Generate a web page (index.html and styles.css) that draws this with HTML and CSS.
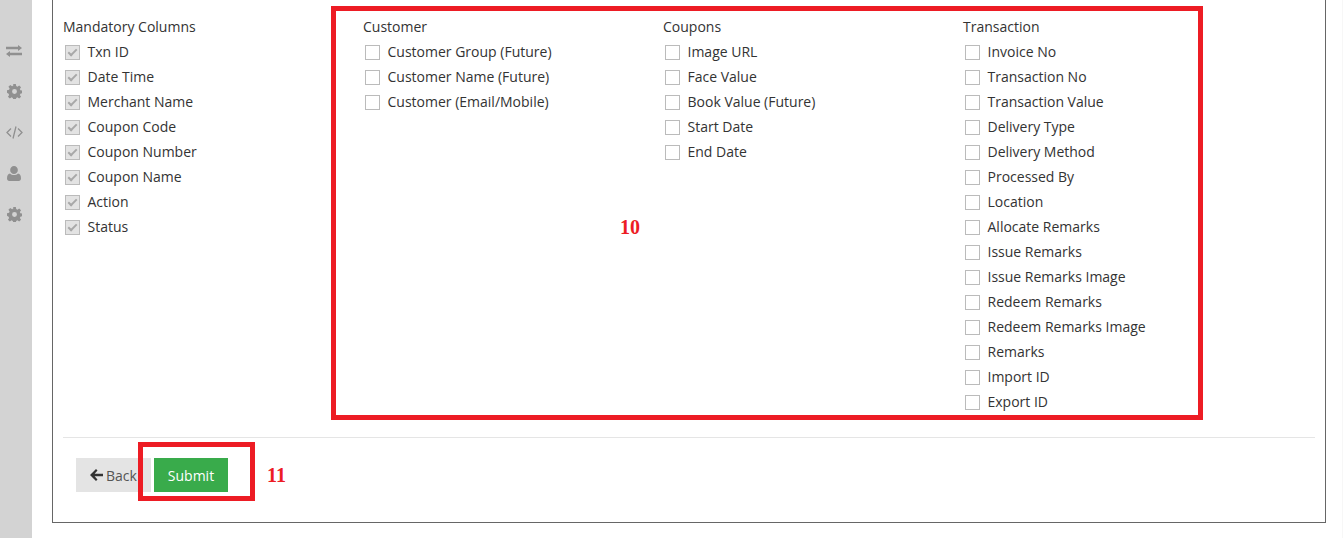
FILE: index.html
```html
<!DOCTYPE html>
<html lang="en">
<head>
    <meta charset="UTF-8">
    <meta name="viewport" content="width=device-width, initial-scale=1.0">
    <title>Export Columns</title>
    <link rel="stylesheet" href="styles.css">
</head>
<body>

<div class="layout">
    <nav class="sidebar">
        <span class="nav-item"><svg class="icon-swap" viewBox="0 0 16 12"><path d="M0 1.800h12V0l4 3-4 3V4.200H0zM16 7.800H4V6l-4 3 4 3v-1.800h12z" fill="#909090"/></svg></span>
        <span class="nav-item"><svg class="icon-gear" viewBox="0 0 16 16"><path fill="#909090" fill-rule="evenodd" d="M6.600 0h2.800l.4 2.200 1.300.6 1.900-1.300 2 2-1.300 1.900.6 1.300 2.200.4v2.800l-2.200.4-.6 1.300 1.300 1.900-2 2-1.900-1.300-1.300.6-.4 2.200H6.600l-.4-2.200-1.300-.6-1.900 1.300-2-2 1.300-1.900-.6-1.300L0 9.400V6.600l2.200-.4.6-1.300-1.300-1.900 2-2 1.900 1.300 1.300-.6zM8 5.400a2.600 2.600 0 1 0 0 5.200 2.600 2.600 0 0 0 0-5.200z"/></svg></span>
        <span class="nav-item"><svg class="icon-code" viewBox="0 0 17 13"><path d="M5 2.500L1 6.500l4 4M12 2.500l4 4-4 4M10 .5l-3 12" fill="none" stroke="#909090" stroke-width="1.300"/></svg></span>
        <span class="nav-item"><svg class="icon-user" viewBox="0 0 14 15"><path fill="#909090" d="M7 0a3.800 3.800 0 0 1 3.800 4A3.800 3.800 0 0 1 7 8 3.800 3.800 0 0 1 3.200 4 3.800 3.800 0 0 1 7 0zM3 7.500C4 8.500 5.500 9 7 9s3-.5 4-1.500c2 .2 3 2 3 5 0 1.600-1 2.500-2.200 2.500H2.200C1 15 0 14.100 0 12.500c0-3 1-4.800 3-5z"/></svg></span>
        <span class="nav-item"><svg class="icon-gear" viewBox="0 0 16 16"><path fill="#909090" fill-rule="evenodd" d="M6.600 0h2.800l.4 2.200 1.300.6 1.900-1.300 2 2-1.300 1.900.6 1.300 2.200.4v2.800l-2.200.4-.6 1.300 1.300 1.900-2 2-1.900-1.300-1.300.6-.4 2.200H6.600l-.4-2.200-1.300-.6-1.900 1.300-2-2 1.300-1.900-.6-1.300L0 9.400V6.600l2.200-.4.6-1.300-1.300-1.900 2-2 1.900 1.300 1.300-.6zM8 5.400a2.600 2.600 0 1 0 0 5.200 2.600 2.600 0 0 0 0-5.200z"/></svg></span>
    </nav>

    <main class="panel">
        <form class="columns-form">
            <div class="columns">
                <div class="column">
                    <div class="column-title">Mandatory Columns</div>
                    <label class="check"><input type="checkbox" checked disabled>Txn ID</label>
                    <label class="check"><input type="checkbox" checked disabled>Date Time</label>
                    <label class="check"><input type="checkbox" checked disabled>Merchant Name</label>
                    <label class="check"><input type="checkbox" checked disabled>Coupon Code</label>
                    <label class="check"><input type="checkbox" checked disabled>Coupon Number</label>
                    <label class="check"><input type="checkbox" checked disabled>Coupon Name</label>
                    <label class="check"><input type="checkbox" checked disabled>Action</label>
                    <label class="check"><input type="checkbox" checked disabled>Status</label>
                </div>
                <div class="column">
                    <div class="column-title">Customer</div>
                    <label class="check"><input type="checkbox">Customer Group (Future)</label>
                    <label class="check"><input type="checkbox">Customer Name (Future)</label>
                    <label class="check"><input type="checkbox">Customer (Email/Mobile)</label>
                </div>
                <div class="column">
                    <div class="column-title">Coupons</div>
                    <label class="check"><input type="checkbox">Image URL</label>
                    <label class="check"><input type="checkbox">Face Value</label>
                    <label class="check"><input type="checkbox">Book Value (Future)</label>
                    <label class="check"><input type="checkbox">Start Date</label>
                    <label class="check"><input type="checkbox">End Date</label>
                </div>
                <div class="column">
                    <div class="column-title">Transaction</div>
                    <label class="check"><input type="checkbox">Invoice No</label>
                    <label class="check"><input type="checkbox">Transaction No</label>
                    <label class="check"><input type="checkbox">Transaction Value</label>
                    <label class="check"><input type="checkbox">Delivery Type</label>
                    <label class="check"><input type="checkbox">Delivery Method</label>
                    <label class="check"><input type="checkbox">Processed By</label>
                    <label class="check"><input type="checkbox">Location</label>
                    <label class="check"><input type="checkbox">Allocate Remarks</label>
                    <label class="check"><input type="checkbox">Issue Remarks</label>
                    <label class="check"><input type="checkbox">Issue Remarks Image</label>
                    <label class="check"><input type="checkbox">Redeem Remarks</label>
                    <label class="check"><input type="checkbox">Redeem Remarks Image</label>
                    <label class="check"><input type="checkbox">Remarks</label>
                    <label class="check"><input type="checkbox">Import ID</label>
                    <label class="check"><input type="checkbox">Export ID</label>
                </div>
            </div>
            <hr class="divider">
            <div class="actions">
                <button type="button" class="btn btn-back"><svg class="back-icon" viewBox="0 0 13 12"><path d="M6 0L0 6l6 6 1.500-1.500L4.600 7.300H13V4.700H4.600l2.900-3.200z" fill="#333"/></svg>Back</button>
                <button type="submit" class="btn btn-submit">Submit</button>
            </div>
        </form>

        <!-- annotations drawn over the screenshot -->
        <div class="mark mark-columns"></div>
        <div class="mark mark-submit"></div>
        <span class="mark-num num-columns">10</span>
        <span class="mark-num num-submit">11</span>
    </main>
</div>

</body>
</html>
```

FILE: styles.css
```css
body {
    margin: 0;
    background-color: white;
    font-family: "Open Sans", Arial, sans-serif;
    font-size: 14px;
    color: #333;
    overflow: hidden;
}
.layout {
    display: flex;
    box-sizing: border-box;
    height: 538px;
    border-right: 1px solid #f7f7f7;
}
.sidebar {
    width: 32px;
    flex: none;
    box-sizing: border-box;
    padding: 30px 4px 0 0;
    background-color: #d3d3d3;
}
.nav-item {
    display: flex;
    align-items: center;
    justify-content: center;
    height: 41px;
}
.icon-swap {
    width: 16px;
    height: 12px;
}
.icon-gear {
    width: 15px;
    height: 15px;
}
.icon-code {
    width: 17px;
    height: 13px;
}
.icon-user {
    width: 14px;
    height: 15px;
}
.panel {
    position: relative;
    box-sizing: border-box;
    width: 1274px;
    height: 524px;
    margin: -1px 0 0 20px;
    border: 1px solid #666;
    border-top: none;
}
.columns-form {
    padding: 16px 10px 0;
}
.columns {
    display: grid;
    grid-template-columns: repeat(4, 300px);
    height: 422px;
}
.column-title {
    height: 25px;
    line-height: 23px;
}
.check {
    display: flex;
    align-items: center;
    box-sizing: border-box;
    height: 25px;
    padding: 0 0 2px 2px;
}
.check input {
    appearance: none;
    flex: none;
    width: 15px;
    height: 15px;
    margin: 2px 7.500px 0 0;
    border: 1px solid #bbb;
    background-color: white;
}
.check input:checked {
    background-color: #e3e3e3;
}
.check input:checked::after {
    content: "";
    display: block;
    width: 7px;
    height: 3px;
    margin: 3px 0 0 2px;
    border-left: 2px solid #a8a8a8;
    border-bottom: 2px solid #a8a8a8;
    transform: rotate(-45deg);
}
.divider {
    margin: 0;
    border: none;
    border-top: 1px solid #e5e5e5;
}
.actions {
    display: flex;
    gap: 3px;
    margin: 20px 0 0 13px;
}
.btn {
    display: flex;
    align-items: center;
    justify-content: center;
    height: 34px;
    border: none;
    font-family: inherit;
    font-size: 14px;
    padding: 0;
}
.btn-back {
    width: 75px;
    background-color: #e4e4e4;
    color: #555;
}
.back-icon {
    width: 13px;
    height: 12px;
    margin-right: 3px;
}
.btn-submit {
    width: 74px;
    background-color: #39ab4b;
    color: white;
}
.mark {
    position: absolute;
    box-sizing: border-box;
    border: 5px solid #ed1c24;
}
.mark-columns {
    left: 278px;
    top: 7px;
    width: 872px;
    height: 414px;
}
.mark-submit {
    left: 85px;
    top: 443px;
    width: 117px;
    height: 59px;
}
.mark-num {
    position: absolute;
    font-family: "Liberation Serif", "Times New Roman", serif;
    font-size: 20px;
    font-weight: bold;
    color: #ed1c24;
}
.num-columns {
    left: 567px;
    top: 217px;
}
.num-submit {
    left: 214px;
    top: 465px;
}
```
